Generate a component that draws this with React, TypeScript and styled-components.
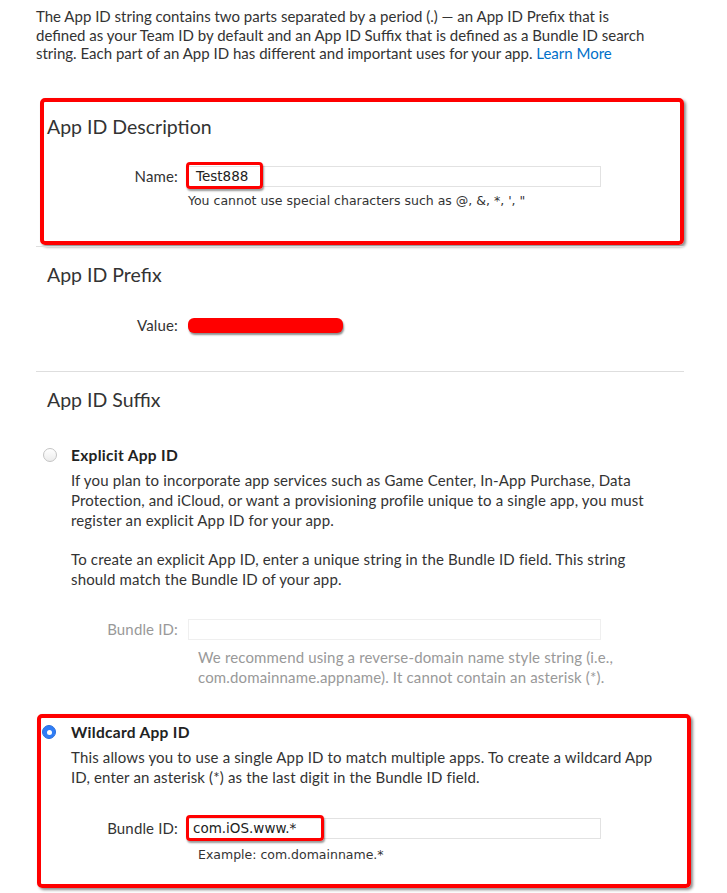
import React from "react";
import styled, { createGlobalStyle } from "styled-components";

const Global = createGlobalStyle`
  html, body { margin: 0; padding: 0; background: #fff; }
  body { font-family: Lato, "Liberation Sans", sans-serif; color: #333; }
`;

const Page = styled.div`
  width: 648px;
  padding: 7px 0 10px 36px;
`;

const Intro = styled.p`
  margin: 0;
  width: 621px;
  font-size: 15px;
  letter-spacing: 0;
  line-height: 18.7px;
`;

const Link = styled.a`
  color: #0070c9;
  text-decoration: none;
`;

const Highlight = styled.div<{ $ml: number; $mr: number; $mt: number }>`
  margin: ${(p) => p.$mt}px ${(p) => p.$mr}px 0 ${(p) => p.$ml}px;
  border: 4px solid #ff0000;
  border-radius: 5px;
  box-shadow: 2px 2px 3px rgba(0, 0, 0, 0.45);
`;

const Section = styled.section<{ $pt: number; $pb: number; $pl: number }>`
  padding: ${(p) => p.$pt}px 0 ${(p) => p.$pb}px ${(p) => p.$pl}px;
`;

const Divider = styled.hr<{ $mt: number }>`
  margin: ${(p) => p.$mt}px 0 0 0;
  border: 0;
  border-top: 1px solid #dedede;
`;

const Heading = styled.h2`
  margin: 0;
  font-size: 19.5px;
  font-weight: 400;
  line-height: 24px;
  color: #333;
`;

const FieldRow = styled.div<{ $label: number; $mt: number }>`
  display: grid;
  grid-template-columns: ${(p) => p.$label}px 413px;
  column-gap: 10px;
  align-items: center;
  margin-top: ${(p) => p.$mt}px;
`;

const Label = styled.label<{ $muted?: boolean }>`
  text-align: right;
  font-size: 15px;
  letter-spacing: 0.15px;
  line-height: 21px;
  color: ${(p) => (p.$muted ? "#999" : "#333")};
`;

const Field = styled.div<{ $faint?: boolean; $pad: number }>`
  position: relative;
  box-sizing: border-box;
  height: 21px;
  border: 1px solid ${(p) => (p.$faint ? "#efefef" : "#e2e2e2")};
  background: #fff;
  padding-left: ${(p) => p.$pad}px;
  font-family: "DejaVu Sans", sans-serif;
  font-size: 13.5px;
  line-height: 19px;
  color: #222;
`;

const Mark = styled.span<{ $l: number; $t: number; $w: number; $h: number }>`
  position: absolute;
  left: ${(p) => p.$l}px;
  top: ${(p) => p.$t}px;
  width: ${(p) => p.$w}px;
  height: ${(p) => p.$h}px;
  box-sizing: border-box;
  border: 3px solid #ff0000;
  border-radius: 4px;
  box-shadow: 1px 2px 2px rgba(0, 0, 0, 0.4);
`;

const Scribble = styled.span`
  display: block;
  width: 155px;
  height: 15px;
  border-radius: 6px;
  background: #ff0000;
  box-shadow: 1px 2px 2px rgba(0, 0, 0, 0.45);
`;

const Hint = styled.div<{ $indent: number; $mt: number; $sys?: boolean; $muted?: boolean; $w?: number }>`
  grid-column: 2;
  margin-top: ${(p) => p.$mt}px;
  padding-left: ${(p) => p.$indent}px;
  ${(p) => (p.$w ? `width: ${p.$w}px;` : "")}
  font-family: ${(p) => (p.$sys ? `"DejaVu Sans", sans-serif` : `Lato, "Liberation Sans", sans-serif`)};
  font-size: ${(p) => (p.$sys ? "12.5px" : "15px")};
  letter-spacing: ${(p) => (p.$sys ? "0" : "0.15px")};
  line-height: ${(p) => (p.$sys ? "16px" : "20px")};
  color: ${(p) => (p.$muted ? "#999" : "#333")};
`;

const Option = styled.div<{ $mt: number }>`
  display: grid;
  grid-template-columns: 24px 1fr;
  margin-top: ${(p) => p.$mt}px;
`;

const Radio = styled.span<{ $checked?: boolean; $shift: number }>`
  width: 14px;
  height: 14px;
  margin: 3px 0 0 ${(p) => p.$shift}px;
  box-sizing: border-box;
  border-radius: 50%;
  display: flex;
  align-items: center;
  justify-content: center;
  ${(p) =>
    p.$checked
      ? `background: #2f7df6; border: 1px solid #2a6fdc;`
      : `background: linear-gradient(#ffffff, #ececec); border: 1px solid #c4c4c4;`}
`;

const Dot = styled.span`
  width: 5px;
  height: 5px;
  border-radius: 50%;
  background: #fff;
`;

const OptionBody = styled.div``;

const OptionTitle = styled.div`
  font-size: 15.5px;
  font-weight: 700;
  letter-spacing: 0.3px;
  line-height: 20px;
  color: #222;
`;

const Para = styled.p<{ $mt: number }>`
  margin: ${(p) => p.$mt}px 0 0 0;
  width: 592px;
  font-size: 15px;
  letter-spacing: 0.15px;
  line-height: 20px;
`;

export default function App() {
  return (
    <>
      <Global />
      <Page>
        <Intro>
          The App ID string contains two parts separated by a period (.) — an App ID Prefix that is defined as your
          Team ID by default and an App ID Suffix that is defined as a Bundle ID search string. Each part of an App ID
          has different and important uses for your app. <Link href="#">Learn More</Link>
        </Intro>

        <Highlight $ml={4} $mr={0} $mt={35}>
          <Section $pt={13} $pb={32} $pl={3}>
            <Heading>App ID Description</Heading>
            <FieldRow $label={131} $mt={27}>
              <Label>Name:</Label>
              <Field $pad={7}>
                Test888
                <Mark $l={-3} $t={-5} $w={77} $h={27} />
              </Field>
              <Hint $indent={0} $mt={6} $sys>
                You cannot use special characters such as @, &amp;, *, ', "
              </Hint>
            </FieldRow>
          </Section>
        </Highlight>
        <Divider $mt={1} />

        <Section $pt={16} $pb={35} $pl={11}>
          <Heading>App ID Prefix</Heading>
          <FieldRow $label={131} $mt={28}>
            <Label>Value:</Label>
            <Scribble />
          </FieldRow>
        </Section>
        <Divider $mt={0} />

        <Section $pt={16} $pb={0} $pl={11}>
          <Heading>App ID Suffix</Heading>
          <Option $mt={33}>
            <Radio $shift={-4} />
            <OptionBody>
              <OptionTitle>Explicit App ID</OptionTitle>
              <Para $mt={5}>
                If you plan to incorporate app services such as Game Center, In-App Purchase, Data Protection, and
                iCloud, or want a provisioning profile unique to a single app, you must register an explicit App ID for
                your app.
              </Para>
              <Para $mt={19}>
                To create an explicit App ID, enter a unique string in the Bundle ID field. This string should match the
                Bundle ID of your app.
              </Para>
              <FieldRow $label={107} $mt={29.5}>
                <Label $muted>Bundle ID:</Label>
                <Field $faint $pad={7} />
                <Hint $indent={10} $mt={7.5} $muted $w={440}>
                  We recommend using a reverse-domain name style string (i.e., com.domainname.appname). It cannot
                  contain an asterisk (*).
                </Hint>
              </FieldRow>
            </OptionBody>
          </Option>
        </Section>

        <Highlight $ml={1} $mr={-7} $mt={27}>
          <Section $pt={4} $pb={21} $pl={6}>
            <Option $mt={0}>
              <Radio $checked $shift={-5}>
                <Dot />
              </Radio>
              <OptionBody>
                <OptionTitle>Wildcard App ID</OptionTitle>
                <Para $mt={5}>
                  This allows you to use a single App ID to match multiple apps. To create a wildcard App ID, enter an
                  asterisk (*) as the last digit in the Bundle ID field.
                </Para>
                <FieldRow $label={107} $mt={31}>
                  <Label>Bundle ID:</Label>
                  <Field $pad={4}>
                    com.iOS.www.*
                    <Mark $l={-3} $t={-4} $w={138} $h={26} />
                  </Field>
                  <Hint $indent={10} $mt={8} $sys>
                    Example: com.domainname.*
                  </Hint>
                </FieldRow>
              </OptionBody>
            </Option>
          </Section>
        </Highlight>
      </Page>
    </>
  );
}
